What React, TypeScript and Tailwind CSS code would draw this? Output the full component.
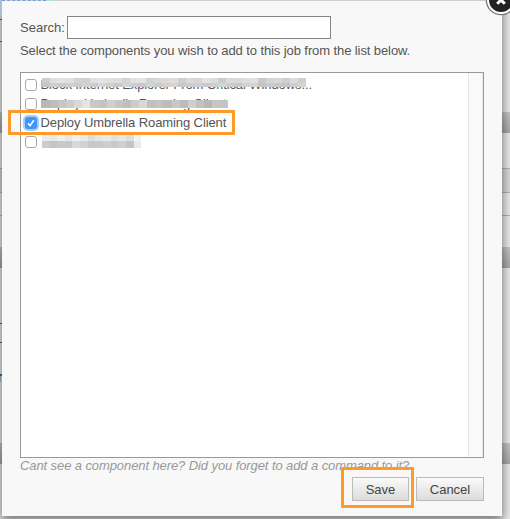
import React from 'react';

type Row = { label: string; checked?: boolean; cells: string[][]; cover: string };

const rows: Row[] = [
  {
    label: 'Block Internet Explorer From Critical Windows...',
    cover: 'left-[1px] top-[1px] h-[9px] w-[264px]',
    cells: [
      ['#cdcdcd','#dedede','#e3e3e3','#e0e0e0','#d3d3d3','#d0d0d0','#e0e0e0','#e4e4e4','#e0e0e0','#dedede','#d4d4d4','#e2e2e2','#e4e4e4','#d2d2d2','#d8d8d8','#dadada','#dedede','#cfcfcf','#dadada','#d8d4d6','#e2e2e2','#dcdcdc','#cccccc','#dadada','#d8d8d8','#dedede','#e0e0e0','#c8c8c8','#d4d4d4','#d8d8d8','#cfcfcf','#dcdcdc','#cfcfcf'],
      ['#c6c6c6','#cfcfcf','#cacaca','#d0d0d0','#cbcbcb','#d2d2d2','#cccccc','#d6d6d6','#d0d0d0','#c9c9c9','#d4d4d4','#cecece','#c8c8c8','#d2d2d2','#cccccc','#d0d0d0','#d6d6d6','#c9c9c9','#cecece','#d2ced0','#cacaca','#cfcfcf','#d4d4d4','#cccccc','#c8c8c8','#d0d0d0','#d4d4d4','#c4c4c4','#cacaca','#c8c8c8','#c5c5c5','#cecece','#d4d4d4'],
    ],
  },
  {
    label: 'Deploy Umbrella Roaming Client',
    cover: 'left-[1px] top-[4px] h-[8px] w-[187px]',
    cells: [
      ['#b8b8b8','#bdbdbd','#c6c6c6','#cdcdcd','#d8d8d8','#e4e4e4','#c8c8c8','#c4c4c4','#cfcfcf','#c6c6c6','#bebebe','#cccccc','#d8d8d8','#c2bfc0','#c4c4c4','#bcbcbc','#c8c8c8','#bcbcbc','#cfcfcf','#c4c0c4','#b8b8b8','#c6c6c6','#c4c4c4'],
    ],
  },
  { label: 'Deploy Umbrella Roaming Client', checked: true, cells: [], cover: '' },
  {
    label: '',
    cover: 'left-[1px] top-0 h-[14px] w-[100px]',
    cells: [
      ['#ececec','#e9e9e9','#efefef','#e6e6e6','#f1f1f1','#e9e9e9','#dddddd','#e6e6e6','#eaeaea','#e0e0e0','#e6e6e6','#dedede','#f3f3f3'],
      ['#cdcdcd','#c5c5c5','#c9c9c9','#c7c7c7','#d9d9d9','#d2d2d2','#c8c8c8','#c9c9c9','#cecece','#c9c9c9','#cfcfcf','#c4c4c4','#eaeaea'],
    ],
  },
];

function Check({ checked }: { checked?: boolean }) {
  return checked ? (
    <span className="flex size-3 shrink-0 items-center justify-center rounded-[3px] bg-[#3f95fa] shadow-[0_0_0_2px_#a4cdf8]">
      <svg viewBox="0 0 12 12" className="size-3" fill="none" stroke="white" strokeWidth="1.6">
        <path d="M3 6.4 5.1 8.6 8.8 3.3" />
      </svg>
    </span>
  ) : (
    <span className="size-3 shrink-0 rounded-[3px] border border-[#a9a9a9] bg-white" />
  );
}

function Backdrop() {
  return (
    <div className="absolute inset-0 flex flex-col overflow-hidden bg-[#ededed]">
      <div className="h-[112px] shrink-0" />
      <div className="h-[21px] shrink-0 bg-linear-to-b from-[#c7c7c7] to-[#a9a9a9]" />
      <div className="h-[35px] shrink-0" />
      <div className="h-[25px] shrink-0 border-y border-[#b5b5b5] bg-[#dcdcdc]" />
      <div className="h-[23px] shrink-0 border-b border-[#b5b5b5]" />
      <div className="h-[31px] shrink-0" />
      <div className="h-[21px] shrink-0 bg-linear-to-b from-[#c7c7c7] to-[#a9a9a9]" />
      <div className="h-[56px] w-1 shrink-0 border-b border-[#666]" />
      <div className="h-[19px] w-1 shrink-0 border-b border-[#666]" />
      <div className="h-[33px] w-1 shrink-0 border-b-2 border-[#666]" />
      <div className="h-[6px] w-px shrink-0 bg-[#8fbcd8]" />
      <div className="h-[61px] shrink-0" />
      <div className="h-[21px] shrink-0 bg-linear-to-b from-[#c7c7c7] to-[#a9a9a9]" />
    </div>
  );
}

export default function App() {
  return (
    <div className="relative h-[519px] w-[510px] overflow-hidden font-['Liberation_Sans',Arial,sans-serif] text-[13px] leading-[15px] text-[#555]">
      <Backdrop />
      <div className="relative mt-px ml-[2px] flex h-[515px] w-[500px] flex-col bg-[#f8f8f8] pr-[18px] pl-[18px] shadow-[0_4px_10px_1px_rgba(0,0,0,0.5)]">
        <div className="mt-[15px] flex h-[23px] shrink-0 items-center">
          <label className="w-[47px] shrink-0 whitespace-nowrap" htmlFor="search">Search:</label>
          <input id="search" className="h-[23px] w-[264px] border border-[#858585] bg-white px-1 outline-none" />
        </div>
        <p className="mt-[4px] h-[15px] shrink-0 tracking-[-0.094px] whitespace-nowrap">Select the components you wish to add to this job from the list below.</p>
        <div className="mt-[14px] flex h-[386px] w-[464px] shrink-0 border border-[#999] bg-white">
          <ul className="flex-1 pt-[2px]">
            {rows.map((row, i) => (
              <li key={i} className="flex h-[19px] items-center pl-[4px]">
                <Check checked={row.checked} />
                <span className="relative ml-[3.5px] block h-[15px] tracking-[-0.094px] whitespace-nowrap">
                  {row.label}
                  {row.cells.length > 0 && (
                    <span className={`absolute flex flex-col ${row.cover}`}>
                      {row.cells.map((line, j) => (
                        <span key={j} className="flex flex-1">
                          {line.map((c, k) => (
                            <span key={k} className="flex-1" style={{ backgroundColor: c }} />
                          ))}
                        </span>
                      ))}
                    </span>
                  )}
                </span>
              </li>
            ))}
          </ul>
          <div className="w-[15px] border-x border-[#e8e8e8] bg-[#fafafa]" />
        </div>
        <p className="h-[15px] shrink-0 tracking-[-0.094px] whitespace-nowrap text-[#999] italic">Cant see a component here? Did you forget to add a command to it?</p>
        <div className="mt-[4px] flex justify-end gap-[7px] text-[#444]">
          <button className="h-6 w-[57px] border border-[#bbb] bg-linear-to-b from-[#fafafa] to-[#dcdcdc]">Save</button>
          <button className="h-6 w-[68px] border border-[#bbb] bg-linear-to-b from-[#fafafa] to-[#dcdcdc]">Cancel</button>
        </div>
      </div>
      <div className="absolute top-0 left-0 h-[16px] w-[2px] border-b border-[#8fd0d8] bg-[#a9bdd8]" />
      <div className="absolute top-[19px] left-0 h-[23px] w-[2px] border-y border-[#555]" />
      <div className="absolute top-0 left-[2px] h-px w-[44px] border-t border-dashed border-[#7d9bc8] bg-[#c9dcec]" />
      <div className="absolute top-0 left-[46px] h-px w-[7px] bg-[#b5e2ec]" />
      <div className="absolute top-[110px] left-[8px] h-[25px] w-[227px] rounded-[1px] border-3 border-[#ff9a28]" />
      <div className="absolute top-[467px] left-[341px] h-[41px] w-[73px] rounded-[1px] border-3 border-[#ff9a28]" />
      <svg className="absolute top-[-16px] left-[485px] h-8 w-8" viewBox="0 0 32 32" fill="none">
        <circle cx="16" cy="16" r="15.3" fill="#777" />
        <circle cx="16" cy="16" r="13" fill="#222" stroke="white" strokeWidth="2" />
        <path d="m12.2 12.2 7.6 7.6m0-7.6-7.6 7.6" stroke="white" strokeWidth="3" />
      </svg>
    </div>
  );
}
